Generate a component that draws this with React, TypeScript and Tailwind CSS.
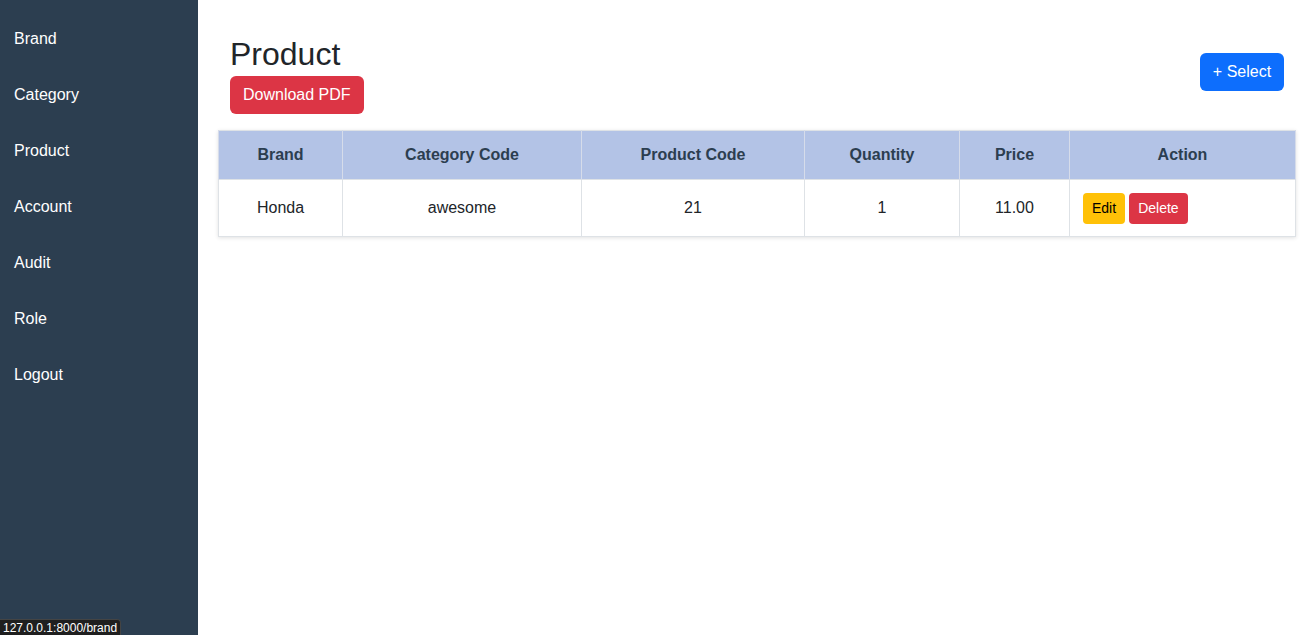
import React from 'react';

const navItems = ['Brand', 'Category', 'Product', 'Account', 'Audit', 'Role', 'Logout'];

const columns = [
  { title: 'Brand', width: 'w-[124px]' },
  { title: 'Category Code', width: 'w-[239px]' },
  { title: 'Product Code', width: 'w-[223px]' },
  { title: 'Quantity', width: 'w-[155px]' },
  { title: 'Price', width: 'w-[110px]' },
  { title: 'Action', width: 'w-[226px]' },
];

const products = [
  { brand: 'Honda', category: 'awesome', code: '21', quantity: 1, price: '11.00' },
];

function Sidebar() {
  return (
    <aside className="w-[198px] shrink-0 min-h-screen bg-[#2c3e50]">
      <ul className="pt-[11px]">
        {navItems.map(item => (
          <li key={item} className="h-[56px] flex items-center px-[14px] text-white text-[16px]">
            {item}
          </li>
        ))}
      </ul>
    </aside>
  );
}

function App() {
  return (
    <div className="flex min-h-screen bg-white font-['Liberation_Sans',Arial,sans-serif]">
      <Sidebar />

      <main className="flex-1 pl-[20px] pr-[15px] pt-[35px]">
        <div className="flex items-start justify-between pl-3 pr-3">
          <div>
            <h2 className="text-[32px] leading-[38px] text-[#212529]">Product</h2>
            <button className="mt-[3px] h-[38px] px-[13px] rounded-md bg-[#dc3545] text-white text-[16px]">
              Download PDF
            </button>
          </div>
          <button className="mt-[18px] h-[38px] w-[84px] rounded-md bg-[#0d6efd] text-white text-[16px]">
            + Select
          </button>
        </div>

        <table className="mt-[16px] w-[1077px] table-fixed border-collapse border border-[#dee2e6] shadow-[0_1px_4px_rgba(0,0,0,0.12)]">
          <thead>
            <tr className="h-[49px] bg-[#b3c3e6]">
              {columns.map(col => (
                <th
                  key={col.title}
                  className={`${col.width} border-x border-[#d6dcea] text-[16px] font-bold text-[#2c3e50] text-center`}
                >
                  {col.title}
                </th>
              ))}
            </tr>
          </thead>
          <tbody>
            {products.map(p => (
              <tr key={p.code} className="h-[57px] text-[16px] text-[#212529]">
                <td className="border border-[#dee2e6] text-center">{p.brand}</td>
                <td className="border border-[#dee2e6] text-center">{p.category}</td>
                <td className="border border-[#dee2e6] text-center">{p.code}</td>
                <td className="border border-[#dee2e6] text-center">{p.quantity}</td>
                <td className="border border-[#dee2e6] text-center">{p.price}</td>
                <td className="border border-[#dee2e6] pl-[13px]">
                  <div className="flex gap-[4px]">
                    <button className="h-[31px] px-[9px] rounded bg-[#ffc107] text-black text-[14px]">Edit</button>
                    <button className="h-[31px] px-[9px] rounded bg-[#dc3545] text-white text-[14px]">Delete</button>
                  </div>
                </td>
              </tr>
            ))}
          </tbody>
        </table>
      </main>

      <div className="fixed left-0 bottom-0 h-[16px] px-[3px] rounded-tr bg-[#1f1f1f] text-white text-[12px] leading-[16px] border-t border-r border-[#444]">
        127.0.0.1:8000/brand
      </div>
    </div>
  );
}

export default App;
